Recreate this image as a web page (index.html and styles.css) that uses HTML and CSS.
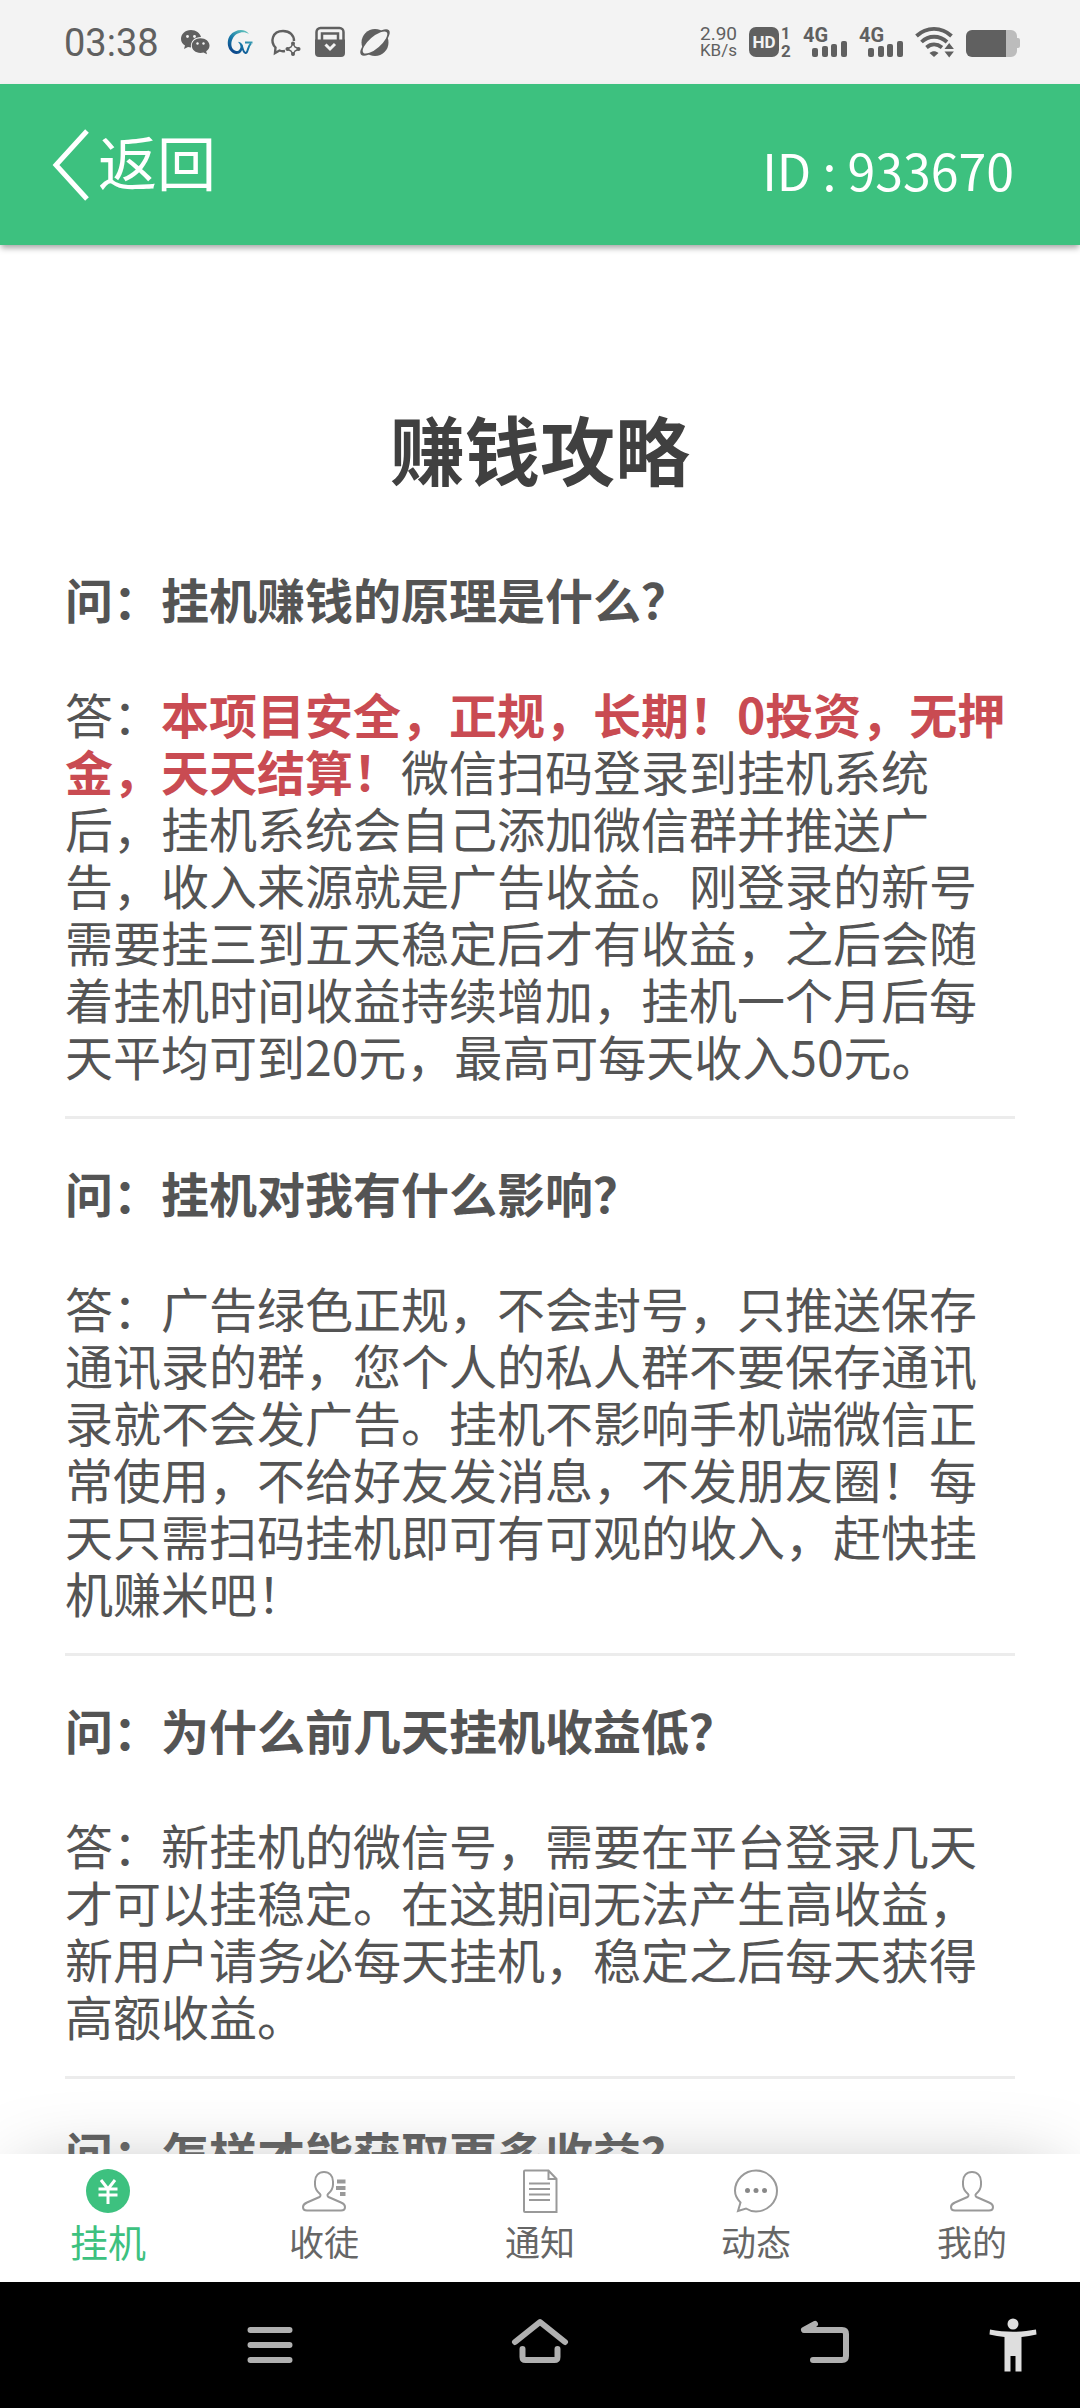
FILE: index.html
```
<!DOCTYPE html>
<html lang="zh-CN">
<head>
    <meta charset="UTF-8">
    <meta name="viewport" content="width=device-width, initial-scale=1.0">
    <title>赚钱攻略</title>
    <link rel="stylesheet" href="styles.css">
</head>
<body>
    <div class="status-bar">
        <span class="time">03:38</span>
        <div class="status-icons">
            <!-- wechat -->
            <svg width="32" height="32" viewBox="0 0 32 32" fill="#606060">
                <path d="M12 4C6 4 2 8 2 13c0 3 1.500 5 4 6.500L5 23l4-2 3 .6C11 15 16 11 22 11 21 7 17 4 12 4z"/>
                <path d="M21.500 12.200c-5 0-8.700 3.200-8.700 7.400s3.700 7.400 8.700 7.400l3-.5 3.500 1.800-.8-3C29.500 24 30.500 22 30.500 19.600c0-4.200-4-7.400-9-7.400z"/>
                <g fill="#f3f3f3"><circle cx="8.500" cy="10.500" r="1.400"/><circle cx="15.500" cy="10.500" r="1.400"/><circle cx="18.500" cy="17.500" r="1.200"/><circle cx="24.500" cy="17.500" r="1.200"/></g>
            </svg>
            <!-- GW logo -->
            <svg width="32" height="32" viewBox="0 0 32 32">
                <defs>
                    <linearGradient id="logo" gradientUnits="userSpaceOnUse" x1="8" y1="28" x2="22" y2="4">
                        <stop offset="0" stop-color="#0b3f86"/>
                        <stop offset=".5" stop-color="#1779a8"/>
                        <stop offset="1" stop-color="#63c5bd"/>
                    </linearGradient>
                </defs>
                <path fill="url(#logo)" d="M25 8C21 2 11 3 6 9.500 1.500 16 4 27 12.500 28c4 0 6.500-3 6-8.500-.2-2-1.800-3.500-4.500-3.800l1.500 2c2.500 3.300 0 7.800-3.300 7.300C7 24 6 17 9 12 12 7 19 4.500 25 8z"/>
                <path d="M17.500 19c1 2 1.500 7.500 4 8 3 .3 1.500-6.500 5.500-9.500M21 16.500h7.500" fill="none" stroke="url(#logo)" stroke-width="2"/>
            </svg>
            <!-- chat with spark -->
            <svg width="32" height="32" viewBox="0 0 32 32" fill="none" stroke="#606060">
                <path d="M16 25c-2.500.4-4 .2-5.500-.5L6 27l.5-5.500C1 16 3 5 14 5c7 0 11 4.500 11 10" stroke-width="2.400"/>
                <path d="M24 17.500l2 3.500 4 2-4 2-2 3.500-2-3.500-4-2 4-2z" stroke-width="1.400"/>
                <g fill="#606060" stroke="none"><circle cx="24" cy="17.500" r="2"/><circle cx="29.500" cy="23" r="2"/><circle cx="24" cy="28" r="2"/><circle cx="18.500" cy="23" r="2"/></g>
            </svg>
            <!-- lock box -->
            <svg width="32" height="32" viewBox="0 0 32 32">
                <path d="M2.500 18V6a4 4 0 0 1 4-4h19a4 4 0 0 1 4 4v12M8 14V7.500h16V14" fill="none" stroke="#606060" stroke-width="2.500"/>
                <path d="M1 13.500h30V27a4 4 0 0 1-4 4H5a4 4 0 0 1-4-4z" fill="#606060"/>
                <path d="M11.500 18.500l4.500 4.500 5-5" fill="none" stroke="#f3f3f3" stroke-width="3"/>
            </svg>
            <!-- planet -->
            <svg width="32" height="32" viewBox="0 0 32 32">
                <circle cx="16" cy="16.500" r="13.500" fill="#606060"/>
                <ellipse cx="16" cy="16.500" rx="18.500" ry="7" transform="rotate(-41 16 16.500)" fill="#606060"/>
                <ellipse cx="16" cy="16.500" rx="15.500" ry="5.800" transform="rotate(-41 16 16.500)" fill="#f3f3f3"/>
            </svg>
        </div>
        <div class="status-right">
            <div class="speed"><span>2.90</span><span class="unit">KB/s</span></div>
            <svg class="badge" width="42" height="32" viewBox="0 0 42 32">
                <rect x="0" y="1" width="30" height="30" rx="7"/>
                <text x="15" y="22" text-anchor="middle" font-size="17" class="light">HD</text>
                <text x="32" y="13" font-size="16">1</text>
                <text x="32" y="31" font-size="17">2</text>
            </svg>
            <svg class="badge" width="44" height="32" viewBox="0 0 44 32">
                <text x="0" y="16" font-size="20">4G</text>
                <rect x="9" y="22" width="6" height="9" rx="2"/>
                <rect x="19" y="20" width="6" height="11" rx="2"/>
                <rect x="28" y="18" width="6" height="13" rx="2"/>
                <rect x="38" y="15" width="6" height="16" rx="2"/>
            </svg>
            <svg class="badge" width="44" height="32" viewBox="0 0 44 32">
                <text x="0" y="16" font-size="20">4G</text>
                <rect x="9" y="22" width="6" height="9" rx="2"/>
                <rect x="19" y="20" width="6" height="11" rx="2"/>
                <rect x="28" y="18" width="6" height="13" rx="2"/>
                <rect x="38" y="15" width="6" height="16" rx="2"/>
            </svg>
            <svg width="39" height="32" viewBox="0 0 39 32">
                <g fill="none" stroke="#606060" stroke-width="3.800">
                    <path d="M1.500 10c10-9.500 25-9.500 35 0"/>
                    <path d="M6.500 16c7-7 18-7 25.500 0"/>
                    <path d="M11.500 21.500c4.500-4 10.500-4 15.500 0"/>
                </g>
                <path d="M14.500 27c3-2.500 6-2.500 9 0L19 31zM29.500 23l4.700-6 4.700 6zM29.500 25.500l4.700 6 4.700-6z" fill="#606060"/>
            </svg>
            <svg width="54" height="32" viewBox="0 0 54 32">
                <path d="M38 4h7a6 6 0 0 1 6 6v2h1a2 2 0 0 1 2 2v6a2 2 0 0 1-2 2h-1v3a6 6 0 0 1-6 6h-7z" fill="#bcbcbc"/>
                <path d="M6 4h34v27H6a6 6 0 0 1-6-6V10a6 6 0 0 1 6-6z" fill="#606060"/>
            </svg>
        </div>
    </div>

    <header class="header">
        <a class="back" href="#">
            <svg width="38" height="74" viewBox="0 0 38 74" fill="none" stroke="#fff" stroke-width="5"><path d="M35 4L4 38l31 34"/></svg>
            <span class="back-text">返回</span>
        </a>
        <span class="user-id">ID : 933670</span>
    </header>

    <main class="content">
        <h1>赚钱攻略</h1>
        <section class="item">
            <h2>问：挂机赚钱的原理是什么？</h2>
            <p>答：<strong>本项目安全，正规，长期！0投资，无押金，天天结算！</strong>微信扫码登录到挂机系统后，挂机系统会自己添加微信群并推送广告，收入来源就是广告收益。刚登录的新号需要挂三到五天稳定后才有收益，之后会随着挂机时间收益持续增加，挂机一个月后每天平均可到20元，最高可每天收入50元。</p>
        </section>
        <section class="item">
            <h2>问：挂机对我有什么影响？</h2>
            <p>答：广告绿色正规，不会封号，只推送保存通讯录的群，您个人的私人群不要保存通讯录就不会发广告。挂机不影响手机端微信正常使用，不给好友发消息，不发朋友圈！每天只需扫码挂机即可有可观的收入，赶快挂机赚米吧！</p>
        </section>
        <section class="item">
            <h2>问：为什么前几天挂机收益低？</h2>
            <p>答：新挂机的微信号，需要在平台登录几天才可以挂稳定。在这期间无法产生高收益，新用户请务必每天挂机，稳定之后每天获得高额收益。</p>
        </section>
        <section class="item">
            <h2>问：怎样才能获取更多收益？</h2>
        </section>
    </main>

    <nav class="tabs">
        <a class="tab active" href="#">
            <svg width="44" height="44" viewBox="0 0 44 44">
                <circle cx="22" cy="22" r="22" fill="#3dc17f"/>
                <path d="M15 11l7 9 7-9M22 19v16M12.500 20h19M12.500 26h19" fill="none" stroke="#fff" stroke-width="3"/>
            </svg>
            挂机
        </a>
        <a class="tab" href="#">
            <svg width="44" height="44" viewBox="0 0 44 44" fill="none" stroke="#999" stroke-width="2">
                <path d="M22 3c-5.500 0-9 4-9 9.500v3c0 4 2 7 5 9.500.8.800.6 2.400-.5 3L5 33.500c-3.500 1.500-4 3-4 4.500 0 2 1.500 3.500 4 3.500h34c2.500 0 4-1.500 4-3.500 0-1.500-.5-3-4-4.500L26.500 28c-1.100-.6-1.300-2.200-.5-3 3-2.500 5-5.500 5-9.500v-3C31 7 27.500 3 22 3z"/>
                <path d="M35 12.500h8.500M34 19h9.500M38 25h5.500" stroke-width="4"/>
            </svg>
            收徒
        </a>
        <a class="tab" href="#">
            <svg width="44" height="44" viewBox="0 0 44 44" fill="none" stroke="#999" stroke-width="2">
                <path d="M7 1.500h23.500l8 8.500v33H7a1 1 0 0 1-1-1v-39.500a1 1 0 0 1 1-1zM30.500 1.500V10h8M11 14.500h21M11 20h21M11 25.500h21M11 31h21"/>
            </svg>
            通知
        </a>
        <a class="tab" href="#">
            <svg width="44" height="44" viewBox="0 0 44 44" fill="none" stroke="#999" stroke-width="2">
                <path d="M22 1.500c11.500 0 21 9 21 20.300S33.500 42.500 22 42.500c-3.500 0-7-1-10-3L4 42l2.500-8.500C3 30 1 26 1 21.800 1 10.500 10.500 1.500 22 1.500z"/>
                <g fill="#888" stroke="none"><circle cx="13.500" cy="21.500" r="2.500"/><circle cx="22" cy="21.500" r="2.500"/><circle cx="30.500" cy="21.500" r="2.500"/></g>
            </svg>
            动态
        </a>
        <a class="tab" href="#">
            <svg width="44" height="44" viewBox="0 0 44 44" fill="none" stroke="#999" stroke-width="2">
                <path d="M22 3c-5.500 0-9 4-9 9.500v3c0 4 2 7 5 9.500.8.800.6 2.400-.5 3L5 33.500c-3.500 1.500-4 3-4 4.500 0 2 1.500 3.500 4 3.500h34c2.500 0 4-1.500 4-3.500 0-1.500-.5-3-4-4.500L26.500 28c-1.100-.6-1.300-2.200-.5-3 3-2.500 5-5.500 5-9.500v-3C31 7 27.500 3 22 3z"/>
            </svg>
            我的
        </a>
    </nav>

    <div class="system-bar">
        <button class="menu" aria-label="菜单">
            <svg width="78" height="56" viewBox="0 0 78 56" fill="none" stroke="#b0b0b0" stroke-width="6" stroke-linecap="round"><path d="M19.500 13h39M19.500 28h39M19.500 43h39"/></svg>
        </button>
        <button aria-label="主页">
            <svg width="78" height="56" viewBox="0 0 78 56" fill="none" stroke="#b0b0b0" stroke-width="6" stroke-linecap="round" stroke-linejoin="round"><path d="M14 25L39 5l25 20M21.500 32v8q0 3 3 3h29q3 0 3-3v-8"/></svg>
        </button>
        <button aria-label="返回">
            <svg width="78" height="56" viewBox="0 0 78 56" fill="none" stroke="#b0b0b0" stroke-width="6" stroke-linecap="round" stroke-linejoin="round"><path d="M44 7l-11 6h38q4 0 4 4v22q0 4-4 4H42"/></svg>
        </button>
        <button aria-label="无障碍">
            <svg width="48" height="56" viewBox="0 0 48 56" fill="#dedede"><circle cx="24" cy="7" r="5.500"/><path d="M1 12.500c15 3 31 3 46 0l.5 5c-5 1.200-10 2-15 2.500v34.500h-6V39h-5v15.500h-6V20c-5-.5-10-1.300-15-2.500z"/></svg>
        </button>
    </div>
</body>
</html>
```
FILE: styles.css
```
* {
    box-sizing: border-box;
}
body {
    margin: 0;
    height: 100vh;
    display: flex;
    flex-direction: column;
    background: #fff;
    color: #545454;
    font-family: "Noto Sans CJK SC", sans-serif;
    overflow: hidden;
}
a {
    color: inherit;
    text-decoration: none;
}
svg {
    flex: none;
    overflow: visible;
}

/* phone status bar */
.status-bar {
    display: flex;
    align-items: center;
    padding: 26px 60px 26px 64px;
    background: #f3f3f3;
    color: #606060;
    font-family: Roboto, sans-serif;
}
.time {
    padding-top: 2px;
    font-size: 38px;
    line-height: 30px;
}
.status-icons {
    display: flex;
    gap: 13px;
    margin-left: 20px;
}
.status-right {
    display: flex;
    gap: 12px;
    margin-left: auto;
}
.speed {
    display: flex;
    flex-direction: column;
    align-items: center;
    font-size: 19px;
    line-height: 16px;
}
.speed .unit {
    font-size: 17px;
}
.badge {
    fill: #606060;
    font-weight: bold;
}
.badge .light {
    fill: #f3f3f3;
}

/* header */
.header {
    position: relative;
    display: flex;
    justify-content: space-between;
    align-items: center;
    padding: 42px 66px 43px 52px;
    background: #3dc17f;
    color: #fff;
    box-shadow: 0 4px 6px -1px rgba(0, 0, 0, 0.35);
}
.back {
    display: flex;
    align-items: center;
    gap: 8px;
    font-size: 59px;
    line-height: 70px;
}
.back-text {
    padding-bottom: 6px;
}
.user-id {
    padding-top: 10px;
    font-size: 50px;
    line-height: 64px;
}

/* questions and answers */
.content {
    flex: 1;
    min-height: 0;
    padding: 158px 65px 0;
    overflow: hidden;
}
h1 {
    margin: 0 0 77px;
    text-align: center;
    color: #404040;
    font-size: 75px;
    line-height: 90px;
}
.item {
    padding-bottom: 32px;
    border-bottom: 3px solid #ececec;
    margin-bottom: 45px;
}
.item h2,
.item p {
    margin: 0;
    font-size: 48px;
    line-height: 57px;
}
.item h2 {
    margin-bottom: 58px;
}
.item strong {
    color: #c94b52;
}

/* bottom tabs */
.tabs {
    position: relative;
    display: flex;
    background: #fff;
    box-shadow: 0 0 80px -25px #a7a7a7;
}
.tab {
    flex: 1;
    display: flex;
    flex-direction: column;
    align-items: center;
    gap: 6px;
    padding: 15px 0 19px;
    color: #666;
    font-size: 35px;
    line-height: 44px;
}
.tab.active {
    color: #3dc17f;
    font-size: 38px;
}

/* android buttons */
.system-bar {
    position: relative;
    display: grid;
    grid-template-columns: 1fr 2fr 2fr 2fr 1fr;
    padding: 35px 0;
    background: #000;
}
.system-bar button {
    display: flex;
    justify-content: center;
    padding: 0;
    border: none;
    background: none;
}
.system-bar .menu {
    grid-column: 2;
}
```
